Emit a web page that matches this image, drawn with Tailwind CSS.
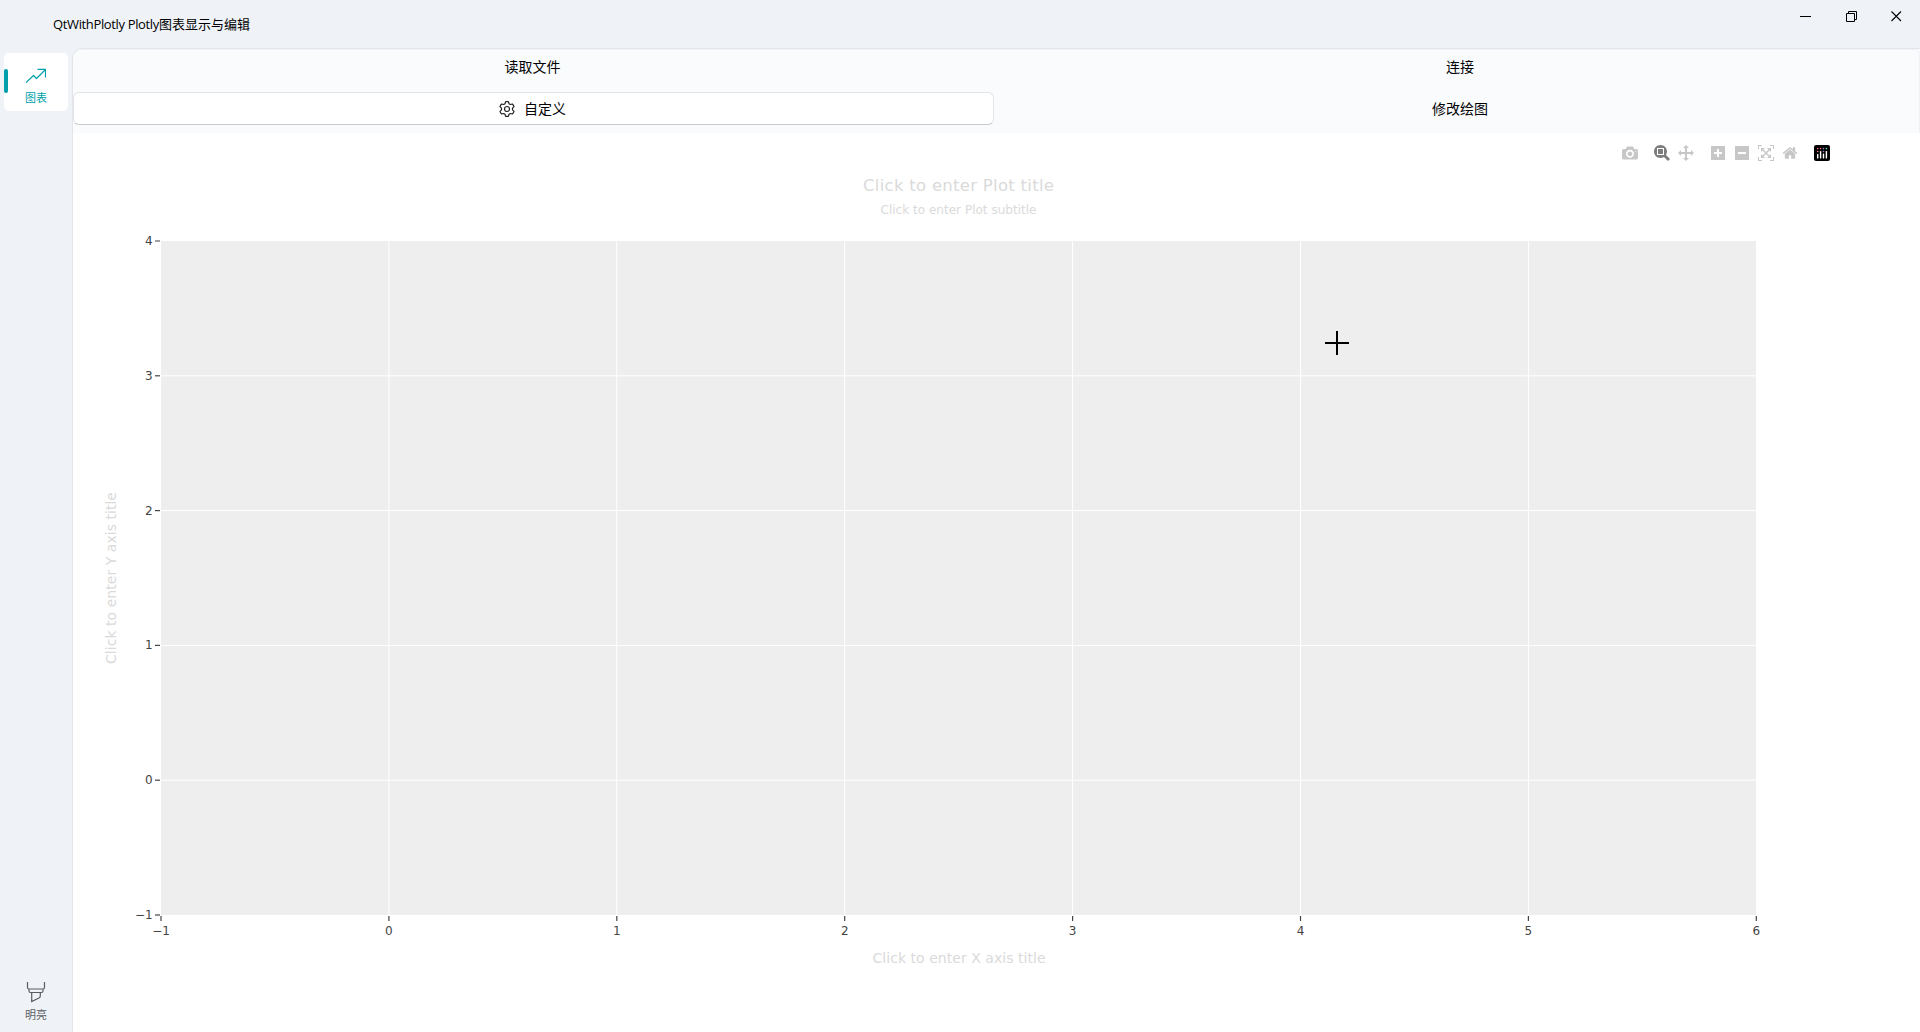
<!DOCTYPE html>
<html lang="zh">
<head>
<meta charset="utf-8">
<title>QtWithPlotly</title>
<script src="https://cdn.jsdelivr.net/npm/@tailwindcss/browser@4"></script>
</head>
<body class="w-[1920px] h-[1032px] overflow-hidden bg-[#eff3f8] text-black font-['Open_Sans','Noto_Sans_CJK_SC',sans-serif] flex flex-col">
  <header class="h-12 shrink-0 flex justify-between pl-[53px]">
    <h1 class="text-[13px] leading-[48px] font-normal whitespace-nowrap flex"><span class="tracking-[-0.36px] whitespace-pre">QtWithPlotly Plotly</span><span>图表显示与编辑</span></h1>
    <svg class="w-[138px] h-8" viewBox="0 0 138 32" fill="none" stroke="#000">
      <path d="M18 16.500h11M64.500 13.500h8v8h-8zM66.500 13V11.500h8v8H73"/>
      <path d="M109.500 11.500l9.500 9.500M119 11.500l-9.500 9.500" stroke-width="1.1"/>
    </svg>
  </header>
  <div class="flex flex-1">
    <nav class="w-[72px] flex flex-col justify-between pt-[5px] pl-1">
      <a class="w-16 h-[58px] rounded-[5px] bg-white flex items-start text-[#009faa]">
        <span class="mt-4 w-1 h-6 rounded-sm bg-[#009faa]"></span>
        <span class="flex flex-col items-center w-14 pt-[15px]">
          <svg class="w-5 h-4" viewBox="0 0 20 16" fill="none" stroke="currentColor" stroke-width="1.2"><path d="M0 14.500L7.500 7.500L10.500 10.500L19.500 1.500M11.500 1.300H19.500V9.500" stroke-linejoin="round"/></svg>
          <span class="text-[11px] leading-[14px] mt-[7px]">图表</span>
        </span>
      </a>
      <a class="w-16 h-[58px] flex flex-col items-center text-[#5b5e61] pt-[8px]">
        <svg class="w-5 h-[21px]" viewBox="0 0 20 21" fill="none" stroke="currentColor" stroke-width="1.200"><path d="M1.500 0V5.500Q1.500 7 3 7H17Q18.500 7 18.500 5.500V0M3 7V9Q3 10.500 4.500 10.500H15.500Q17 10.500 17 9V7M5.700 10.500V19.500L13 16Q14.300 15.300 14.300 14V10.500"/></svg>
        <span class="text-[11px] leading-[14px] mt-[5px]">明亮</span>
      </a>
    </nav>
    <main class="flex-1 flex flex-col border-l border-t border-[#e2e5e9] rounded-tl-[10px] bg-[#f9fbfd] overflow-hidden">
      <div class="h-[84px] shrink-0 grid grid-cols-[921px_1fr] grid-rows-[43px_32px] border-r border-t border-[#eff1f5] rounded-tr-[6px] text-sm">
        <button class="pr-[2px] pb-[9px]">读取文件</button>
        <button class="pl-[7px] pb-[10px]">连接</button>
        <button class="flex items-center justify-center gap-[9px] bg-white border border-[#e3e4e6] border-b-[#c9cacc] rounded-[6px] -mt-[1px] pl-[4px] pr-[6px]">
          <svg class="w-4 h-4" viewBox="0 0 16 16" fill="none" stroke="#222" stroke-width="1.200" stroke-linejoin="round"><path d="M6.500.800Q8 .300 9.500.800L10 2.800L11.300 3.500L13.400 3Q14.700 4.200 15 5.700L13.500 7.200V8.800L15 10.300Q14.600 11.800 13.400 13L11.300 12.500L10 13.200L9.500 15.200Q8 15.700 6.500 15.200L6 13.200L4.700 12.500L2.600 13Q1.400 11.800 1 10.300L2.500 8.800V7.200L1 5.700Q1.300 4.200 2.600 3L4.700 3.500L6 2.800Z"/><circle cx="8" cy="8" r="2.500"/></svg>
          <span>自定义</span>
        </button>
        <button class="pl-[7px]">修改绘图</button>
      </div>
      <section class="relative flex-1 bg-white">
        <svg class="block w-[1847px] h-[899px] font-['Verdana','DejaVu_Sans',sans-serif]" viewBox="73 133 1847 899">
          <rect x="161" y="241" width="1595" height="674" fill="#eee"/>
          <g id="grid" stroke="#fff" stroke-width="1"></g>
          <g id="ticks" stroke="#444" stroke-width="1.200"></g>
          <g id="labels" fill="#444" font-size="12"></g>
          <g fill="#dadada" text-anchor="middle">
            <text x="958.500" y="191" font-size="16.500" textLength="191">Click to enter Plot title</text>
            <text x="958.500" y="214" font-size="12" textLength="156">Click to enter Plot subtitle</text>
            <text x="959" y="963" font-size="14" textLength="173">Click to enter X axis title</text>
            <text transform="translate(116 578) rotate(-90)" font-size="14" textLength="172">Click to enter Y axis title</text>
          </g>
          <path d="M1325 343h24M1337 331v24" stroke="#000" stroke-width="2"/>
        </svg>
        <div class="absolute top-3 right-[90px] flex gap-4 text-[#444]/30">
          <svg class="w-4 h-4" viewBox="0 0 1000 1000" fill="currentColor"><path transform="matrix(1 0 0 -1 0 850)" d="m500 450c-83 0-150-67-150-150 0-83 67-150 150-150 83 0 150 67 150 150 0 83-67 150-150 150z m400 150h-120c-16 0-34 13-39 29l-31 93c-6 15-23 28-40 28h-340c-16 0-34-13-39-28l-31-94c-6-15-23-28-40-28h-120c-55 0-100-45-100-100v-450c0-55 45-100 100-100h800c55 0 100 45 100 100v450c0 55-45 100-100 100z m-400-550c-138 0-250 112-250 250 0 138 112 250 250 250 138 0 250-112 250-250 0-138-112-250-250-250z m365 380c-19 0-35 16-35 35 0 19 16 35 35 35 19 0 35-16 35-35 0-19-16-35-35-35z"/></svg>
          <div class="flex gap-2">
            <svg class="w-4 h-4 text-[#444]/70" viewBox="0 0 1000 1000" fill="currentColor"><path transform="matrix(1 0 0 -1 0 850)" d="m1000-25l-250 251c40 63 63 138 63 218 0 224-182 406-407 406-224 0-406-182-406-406s183-406 407-406c80 0 155 22 218 62l250-250 125 125z m-812 250l0 438 437 0 0-438-437 0z m62 375l313 0 0-312-313 0 0 312z"/></svg>
            <svg class="w-4 h-4" viewBox="0 0 1000 1000" fill="currentColor"><path transform="matrix(1 0 0 -1 0 850)" d="m1000 350l-187 188 0-125-250 0 0 250 125 0-188 187-187-187 125 0 0-250-250 0 0 125-188-188 186-187 0 125 252 0 0-250-125 0 187-188 188 188-125 0 0 250 250 0 0-126 187 188z"/></svg>
          </div>
          <div class="flex gap-2">
            <svg class="w-4 h-4" viewBox="0 0 875 1000" fill="currentColor"><path transform="matrix(1 0 0 -1 0 850)" d="m1 787l0-875 875 0 0 875-875 0z m687-500l-187 0 0-187-125 0 0 187-188 0 0 125 188 0 0 187 125 0 0-187 187 0 0-125z"/></svg>
            <svg class="w-4 h-4" viewBox="0 0 875 1000" fill="currentColor"><path transform="matrix(1 0 0 -1 0 850)" d="m0 788l0-876 876 0 0 876-876 0z m688-500l-500 0 0 125 500 0 0-125z"/></svg>
            <svg class="w-4 h-4" viewBox="0 0 1000 1000" fill="currentColor"><path transform="matrix(1 0 0 -1 0 850)" d="m250 850l-187 0-63 0 0-62 0-188 63 0 0 188 187 0 0 62z m688 0l-188 0 0-62 188 0 0-188 62 0 0 188 0 62-62 0z m-875-938l0 188-63 0 0-188 0-62 63 0 187 0 0 62-187 0z m875 188l0-188-188 0 0-62 188 0 62 0 0 62 0 188-62 0z m-125 188l-1 0-93-94-156 156 156 156 92-93 2 0 0 250-250 0 0-2 93-92-156-156-156 156 94 92 0 2-250 0 0-250 0 0 93 93 157-156-157-156-93 94 0 0 0-250 250 0 0 0-94 93 156 157 156-157-93-93 0 0 250 0 0 250z"/></svg>
            <svg class="w-4 h-4" viewBox="0 0 928.600 1000" fill="currentColor"><path transform="matrix(1 0 0 -1 0 850)" d="m786 296v-267q0-15-11-26t-25-10h-214v214h-143v-214h-214q-15 0-25 10t-11 26v267q0 1 0 2t0 2l321 264 321-264q1-1 1-4z m124 39l-34-41q-5-5-12-6h-2q-7 0-12 3l-386 322-386-322q-7-4-13-4-7 2-12 7l-35 41q-4 5-3 13t6 12l401 334q18 15 42 15t43-15l136-114v109q0 8 5 13t13 5h107q8 0 13-5t5-13v-227l122-102q5-5 6-12t-4-13z"/></svg>
          </div>
          <svg class="w-4 h-4" viewBox="0 0 16 16"><rect width="16" height="16" rx="2" fill="#000"/><g fill="#fff"><rect x="3" y="9" width="1.400" height="4.500" rx=".6"/><rect x="5.900" y="6" width="1.400" height="7.500" rx=".6"/><rect x="8.800" y="8.500" width="1.400" height="5" rx=".6"/><rect x="11.700" y="6" width="1.400" height="7.500" rx=".6"/></g><g fill="#ff6f7c"><circle cx="3.700" cy="3.600" r=".8"/><circle cx="3.700" cy="6.500" r=".8"/><circle cx="6.600" cy="3.600" r=".8"/></g><g fill="#9a7bd0"><circle cx="9.500" cy="3.600" r=".8"/><circle cx="9.500" cy="6.500" r=".8"/></g><circle cx="12.400" cy="3.600" r=".8" fill="#43e8d8"/></svg>
        </div>
      </section>
    </main>
  </div>
<script>
const ns = 'http://www.w3.org/2000/svg';
const add = (id, tag, attrs, text) => {
  const e = document.createElementNS(ns, tag);
  for (const k in attrs) e.setAttribute(k, attrs[k]);
  if (text !== undefined) e.textContent = text;
  document.getElementById(id).appendChild(e);
};
const fmt = v => String(v).replace('-', '\u2212');
for (let i = 0; i < 8; i++) {
  const x = 161 + i * 1595.3 / 7;
  if (i && i < 7) add('grid', 'path', { d: `M${x} 241V915` });
  add('ticks', 'path', { d: `M${x} 916v5` });
  add('labels', 'text', { x, y: 935, 'text-anchor': 'middle' }, fmt(i - 1));
}
for (let i = 0; i < 6; i++) {
  const y = 915 - i * 674 / 5;
  if (i && i < 5) add('grid', 'path', { d: `M161 ${y}H1756` });
  add('ticks', 'path', { d: `M160 ${y}h-5` });
  add('labels', 'text', { x: 152.600, y: y + 4, 'text-anchor': 'end' }, fmt(i - 1));
}
</script>
</body>
</html>
